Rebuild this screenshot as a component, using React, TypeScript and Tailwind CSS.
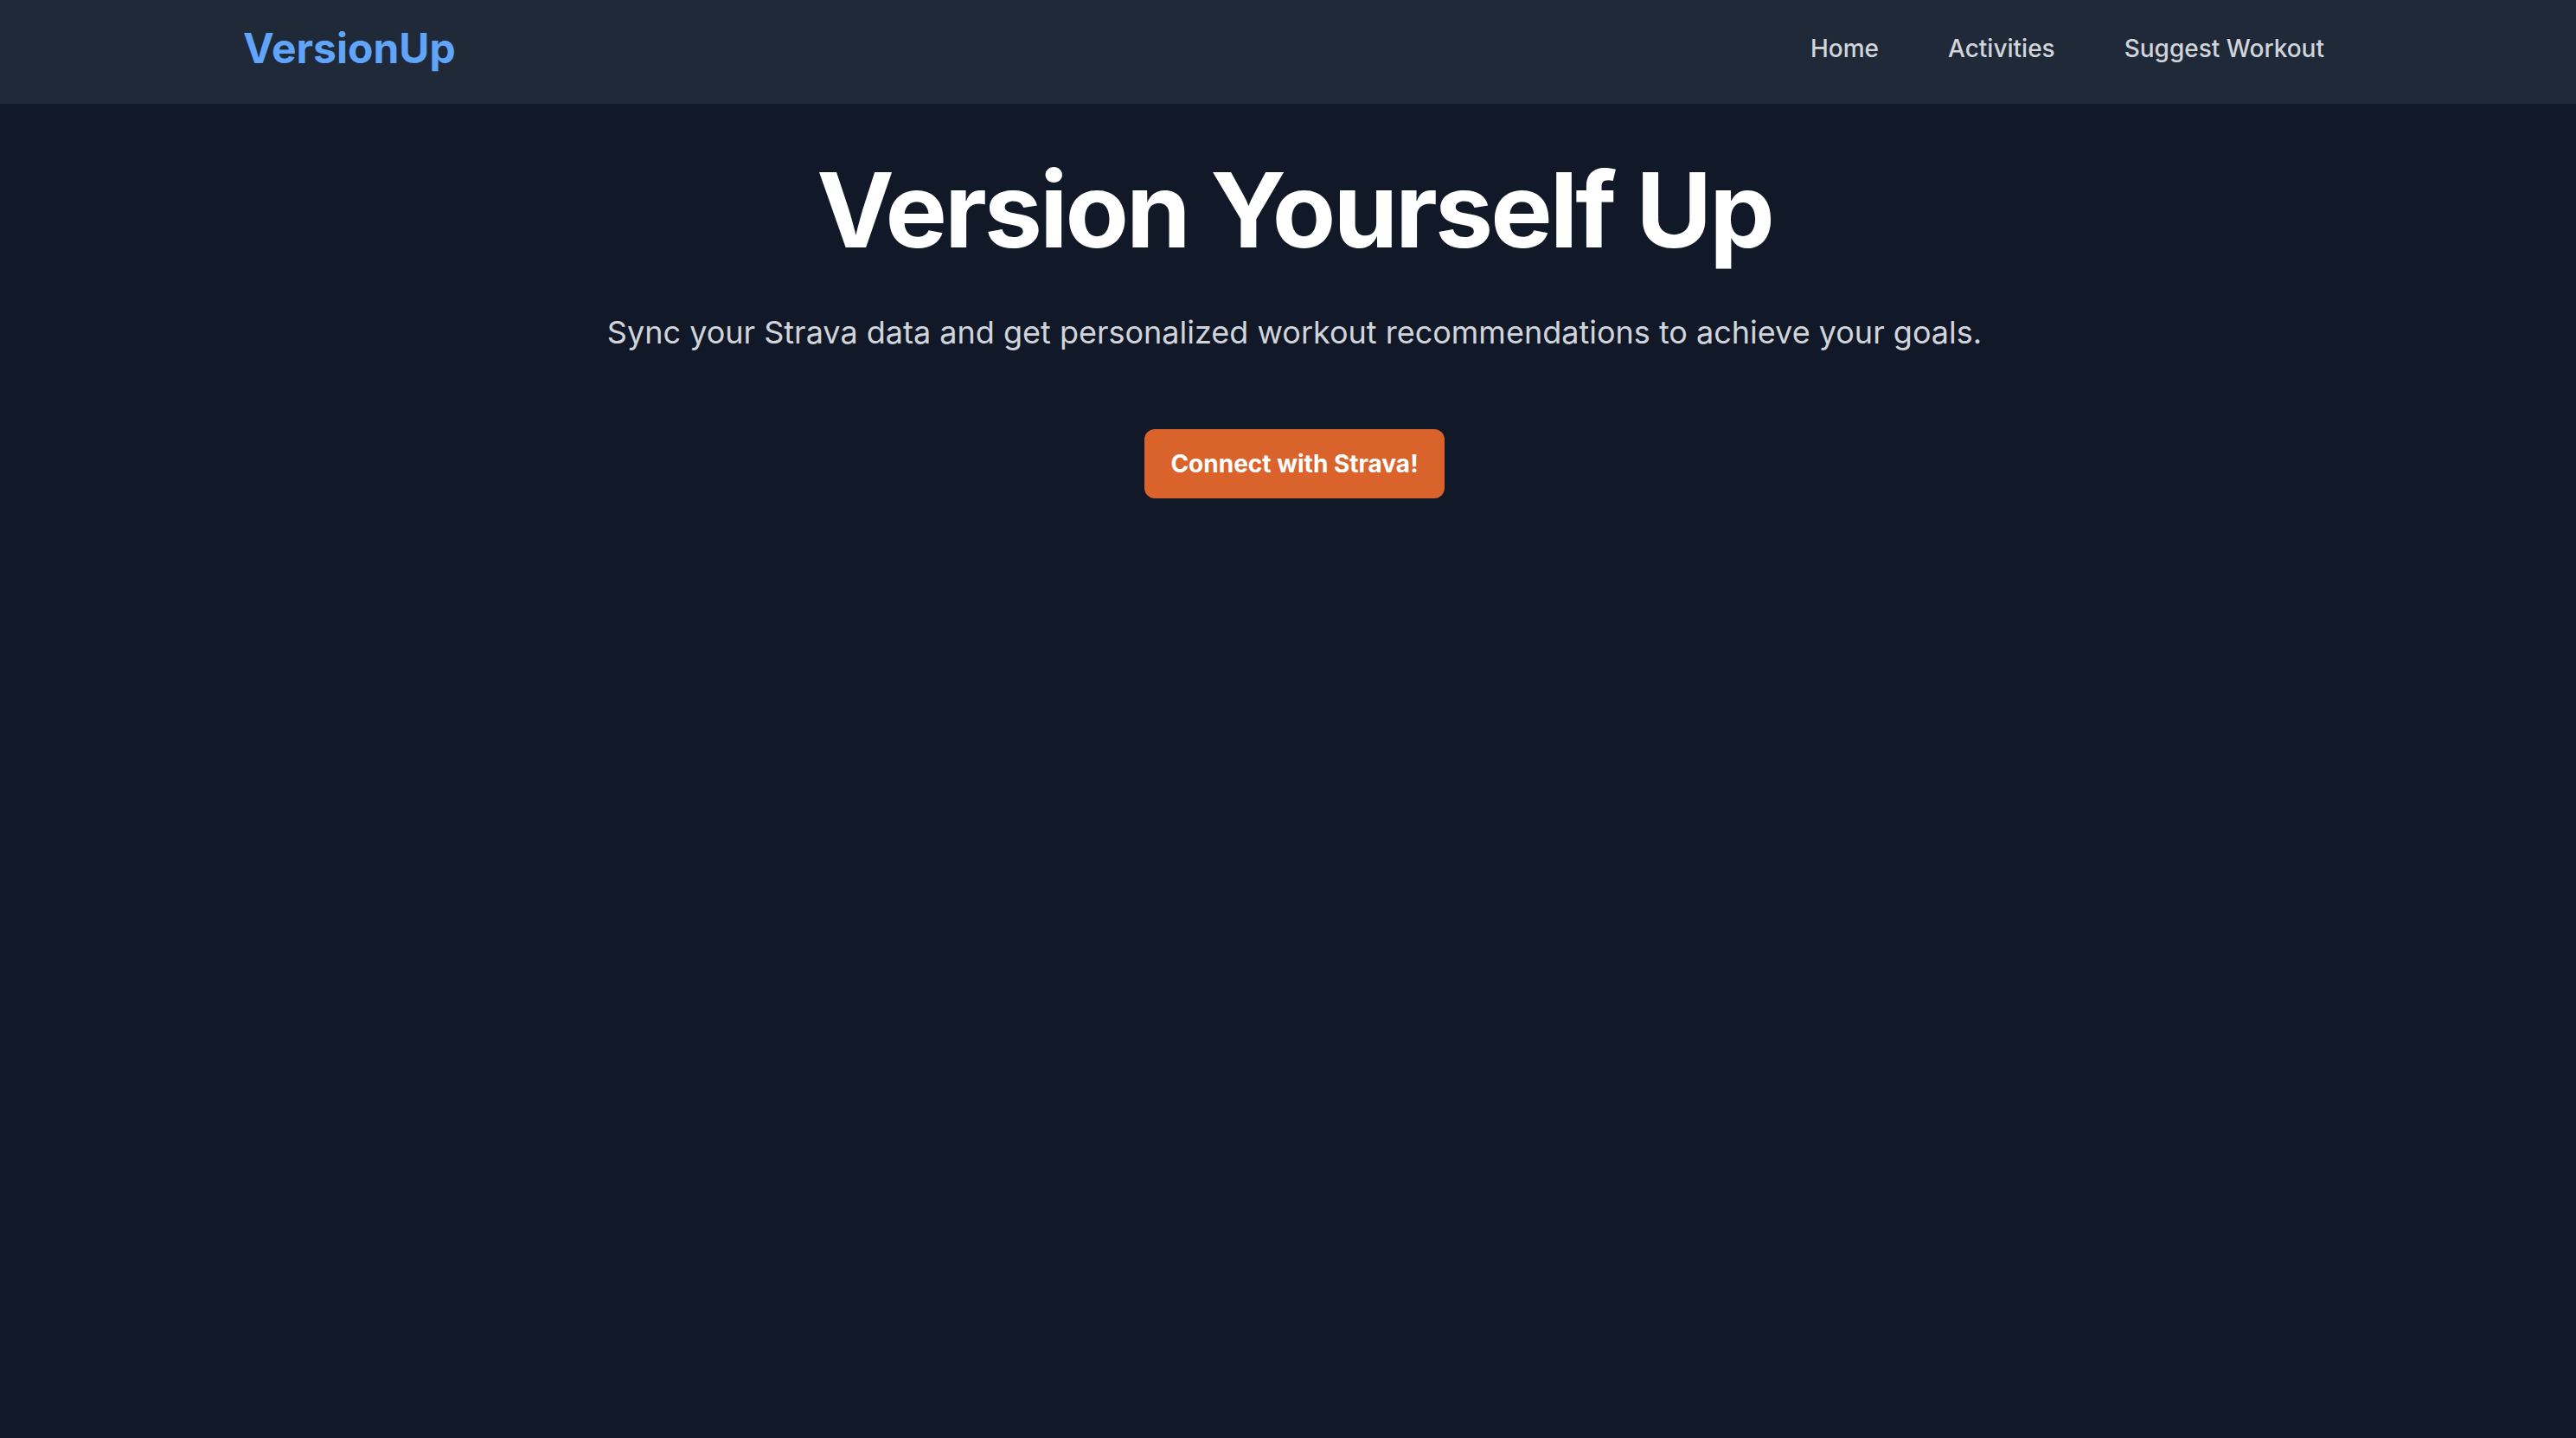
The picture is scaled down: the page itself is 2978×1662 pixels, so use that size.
const links = ["Home", "Activities", "Suggest Workout"];

export default function App() {
  return (
    <div
      className="min-h-screen w-full bg-[#111827]"
      style={{ fontFamily: "Inter, 'Noto Sans', sans-serif" }}
    >
      <nav className="flex h-[120px] items-center justify-between bg-[#1f2937] pb-[8px] pl-[281px] pr-[291px]">
        <span className="text-[48px] font-bold leading-[64px] text-[#60a5fa]">
          VersionUp
        </span>
        <div className="flex items-center gap-[80px]">
          {links.map((link) => (
            <a
              key={link}
              href="#"
              className="text-[28px] font-medium leading-[40px] text-[#d1d5db]"
            >
              {link}
            </a>
          ))}
        </div>
      </nav>

      <main className="flex flex-col items-center pl-[15px] pt-[63px] text-center">
        <h1 className="text-[120px] font-bold leading-[120px] tracking-[-3px] text-white">
          Version Yourself Up
        </h1>
        <p className="mt-[53px] text-[36px] leading-[56px] text-[#d1d5db]">
          Sync your Strava data and get personalized workout recommendations to
          achieve your goals.
        </p>
        <button className="mt-[84px] rounded-[12px] bg-[#d9632b] px-[30px] py-[20px] text-[28px] font-bold leading-[40px] text-white">
          Connect with Strava!
        </button>
      </main>
    </div>
  );
}
